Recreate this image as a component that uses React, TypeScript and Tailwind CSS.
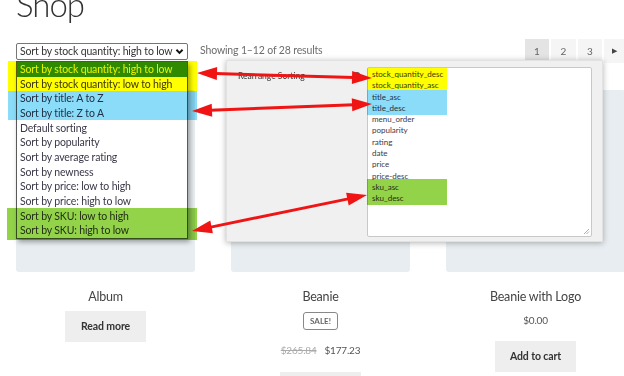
import React from "react";

const FONT = { fontFamily: "Lato, 'Open Sans', sans-serif" };

function Arrow({ x1, y1, x2, y2 }: { x1: number; y1: number; x2: number; y2: number }) {
  const dx = x2 - x1;
  const dy = y2 - y1;
  const len = Math.hypot(dx, dy);
  const ux = dx / len;
  const uy = dy / len;
  const px = -uy;
  const py = ux;
  const L = 20;
  const W = 6.5;
  const head = (tx: number, ty: number, dir: number) => {
    const bx = tx - dir * ux * L;
    const by = ty - dir * uy * L;
    return `${tx},${ty} ${bx + px * W},${by + py * W} ${bx - px * W},${by - py * W}`;
  };
  return (
    <g>
      <line
        x1={x1 + ux * (L - 2)}
        y1={y1 + uy * (L - 2)}
        x2={x2 - ux * (L - 2)}
        y2={y2 - uy * (L - 2)}
        stroke="#f01414"
        strokeWidth={3}
      />
      <polygon points={head(x1, y1, -1)} fill="#f01414" />
      <polygon points={head(x2, y2, 1)} fill="#f01414" />
    </g>
  );
}

const OPTIONS = [
  "Sort by stock quantity: high to low",
  "Sort by stock quantity: low to high",
  "Sort by title: A to Z",
  "Sort by title: Z to A",
  "Default sorting",
  "Sort by popularity",
  "Sort by average rating",
  "Sort by newness",
  "Sort by price: low to high",
  "Sort by price: high to low",
  "Sort by SKU: low to high",
  "Sort by SKU: high to low",
];

const KEYS = [
  "stock_quantity_desc",
  "stock_quantity_asc",
  "title_asc",
  "title_desc",
  "menu_order",
  "popularity",
  "rating",
  "date",
  "price",
  "price-desc",
  "sku_asc",
  "sku_desc",
];

export default function App() {
  return (
    <div className="relative w-[624px] h-[376px] overflow-hidden bg-white text-[#333]" style={FONT}>
      {/* Title */}
      <div className="flex flex-col h-[39px] px-4">
        <h1 className="-mt-[12px] text-[33px] leading-none font-light tracking-[-1px] text-[#333]">Shop</h1>
      </div>

      {/* Toolbar */}
      <div className="flex items-end h-[21px] pl-4">
        <div className="flex items-center justify-between w-[172px] h-[17px] border border-[#767676] rounded-[2px] bg-white pl-[3px] pr-[3px]">
          <span className="text-[10.5px] leading-none tracking-[-0.15px] text-[#333] whitespace-nowrap">Sort by stock quantity: high to low</span>
          <svg className="shrink-0" width="9" height="7" viewBox="0 0 10 8">
            <path d="M1.5 2 L5 5.5 L8.5 2" fill="none" stroke="#111" strokeWidth="2.2" />
          </svg>
        </div>
        <div className="ml-3 self-center mt-[3px] text-[10.5px] tracking-[-0.15px] text-[#6d6d6d]">Showing 1–12 of 28 results</div>
        <div className="ml-auto -mr-[4px] flex gap-[2px] self-start">
          <div className="w-[24px] h-[24px] bg-[#e4e4e4] flex justify-center pt-[5px] text-[10px] text-[#666]">1</div>
          <div className="w-[25px] h-[24px] bg-[#f5f5f5] flex justify-center pt-[5px] text-[10px] text-[#666]">2</div>
          <div className="w-[24px] h-[24px] bg-[#f5f5f5] flex justify-center pt-[5px] text-[10px] text-[#666]">3</div>
          <div className="w-[24px] h-[24px] bg-[#f5f5f5] flex pl-[8px] pt-[6px] text-[7px] text-[#444]">▶</div>
        </div>
      </div>

      {/* Products */}
      <div className="mt-[30px] pl-4 grid grid-cols-[179px_179px_179px] gap-x-[36px]">
        <div className="flex flex-col items-center">
          <div className="w-full h-[182px] rounded-[3px] bg-[#e7edf0]" />
          <div className="mt-[16px] h-[18px] text-[12.5px] tracking-[-0.2px] leading-[18px] text-[#444]">Album</div>
          <div className="mt-[5px] w-[81px] h-[31px] bg-[#eeeeee] flex items-center justify-center text-[10.5px] tracking-[-0.1px] font-bold text-[#333]">
            Read more
          </div>
        </div>
        <div className="flex flex-col items-center">
          <div className="w-full h-[182px] rounded-[3px] bg-[#e7edf0]" />
          <div className="mt-[16px] h-[18px] text-[12.5px] tracking-[-0.2px] leading-[18px] text-[#444]">Beanie</div>
          <div className="mt-[6px] w-[35px] h-[18px] border border-[#888] rounded-[3px] flex items-center justify-center text-[8px] font-bold text-[#666]">
            SALE!
          </div>
          <div className="mt-[11px] h-[18px] flex items-center gap-[8px] text-[10px] tracking-[-0.2px] leading-[18px]">
            <span className="line-through text-[#aaa]">$265.84</span>
            <span className="text-[#555]">$177.23</span>
          </div>
          <div className="mt-[13px] w-[81px] h-[31px] bg-[#eeeeee]" />
        </div>
        <div className="flex flex-col items-center">
          <div className="w-full h-[182px] rounded-[3px] bg-[#e7edf0]" />
          <div className="mt-[16px] h-[18px] text-[12.5px] tracking-[-0.2px] leading-[18px] text-[#444] whitespace-nowrap">Beanie with Logo</div>
          <div className="mt-[5px] h-[18px] text-[10px] tracking-[-0.2px] leading-[18px] text-[#555]">$0.00</div>
          <div className="mt-[12px] w-[81px] h-[31px] bg-[#eeeeee] flex items-center justify-center text-[10.5px] tracking-[-0.1px] font-bold text-[#333]">
            Add to cart
          </div>
        </div>
      </div>

      {/* Dropdown list overlay */}
      <div className="absolute left-[16px] top-[61px] w-[172px] border border-[#5a5a5a] bg-white shadow-[2px_3px_5px_rgba(0,0,0,0.35)]">
        {OPTIONS.map((o, i) => (
          <div
            key={o}
            className={
              i === 0
                ? "h-[14.67px] leading-[14.67px] pl-[3px] text-[10.5px] tracking-[-0.15px] bg-[#2f8a06] text-[#e9f500] whitespace-nowrap"
                : "h-[14.67px] leading-[14.67px] pl-[3px] text-[10.5px] tracking-[-0.15px] text-[#3b3848] whitespace-nowrap"
            }
          >
            {o}
          </div>
        ))}
      </div>
      {/* Highlight bands over dropdown */}
      <div className="absolute left-[8px] top-[61px] w-[189px] h-[30px] bg-[#ffff00] mix-blend-multiply" />
      <div className="absolute left-[8px] top-[91px] w-[189px] h-[29px] bg-[#8bdcf8] mix-blend-multiply" />
      <div className="absolute left-[7px] top-[208px] w-[190px] h-[32px] bg-[#92d34a] mix-blend-multiply" />

      {/* Settings panel screenshot overlay */}
      <div className="absolute left-[226px] top-[60px] w-[377px] h-[182px] bg-[#f0f0f0] border border-[#e2e2e2] shadow-[0_1px_6px_rgba(0,0,0,0.3)] flex">
        <div className="w-[140px] pl-[11px] pt-[9px] text-[8.5px] text-[#333] flex">
          <span>Rearrange Sorting</span>
          <span className="ml-auto mr-[7px] mt-[2px] w-[6px] h-[6px] rounded-full bg-[#555]" />
        </div>
        <div className="mt-[6px] w-[225px] h-[170px] bg-white border border-[#c8c8c8] rounded-[2px] pt-[1px] relative">
          {KEYS.map((k) => (
            <div key={k} className="h-[11.3px] leading-[11.3px] pl-[4px] text-[8px] text-[#3b3848] whitespace-nowrap">
              {k}
            </div>
          ))}
          <svg className="absolute right-[1px] bottom-[1px]" width="7" height="7" viewBox="0 0 7 7">
            <path d="M6 1 L1 6 M6 3.5 L3.5 6" stroke="#999" strokeWidth="0.8" />
          </svg>
        </div>
      </div>
      {/* Highlight bands over textarea */}
      <div className="absolute left-[367px] top-[68px] w-[80px] h-[22px] bg-[#ffff00] mix-blend-multiply" />
      <div className="absolute left-[367px] top-[90px] w-[80px] h-[25px] bg-[#8bdcf8] mix-blend-multiply" />
      <div className="absolute left-[367px] top-[179px] w-[80px] h-[26px] bg-[#92d34a] mix-blend-multiply" />

      {/* Arrows */}
      <svg className="absolute inset-0 pointer-events-none" width="624" height="376" viewBox="0 0 624 376">
        <Arrow x1={197} y1={73} x2={372} y2={78} />
        <Arrow x1={192} y1={111} x2={372} y2={104} />
        <Arrow x1={192} y1={231} x2={367} y2={195} />
      </svg>
    </div>
  );
}
